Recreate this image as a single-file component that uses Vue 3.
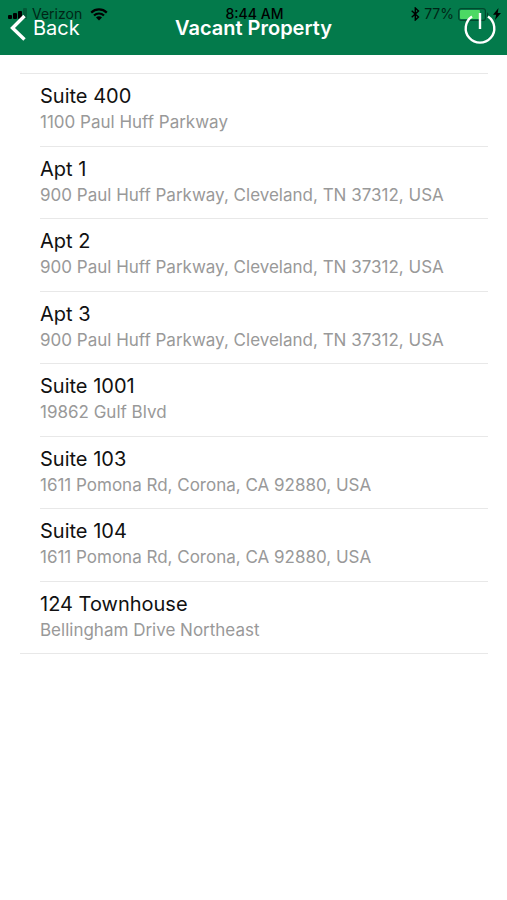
<template>
  <div class="screen">
    <header class="navbar">
      <!-- The system status bar shares the space of the navigation bar -->
      <div class="status">
        <div class="status-side">
          <svg class="signal" width="20" height="12" viewBox="0 0 20 12" aria-hidden="true">
            <rect x="0" y="7" width="4" height="4" rx="1" />
            <rect x="5" y="5" width="4" height="6" rx="1" />
            <rect x="10" y="3" width="4" height="8" rx="1" />
            <rect x="15" y="0" width="4" height="11" rx="1" opacity="0.25" />
          </svg>
          <span class="carrier">Verizon</span>
          <svg width="18" height="13" viewBox="0 0 18 13" aria-hidden="true">
            <path d="M1.200 4.600a11.200 11.200 0 0 1 15.600 0M4 7.500a7.200 7.200 0 0 1 10 0" fill="none" stroke="#000" stroke-width="2.200" />
            <path d="M9 12.500 6 9.500a4.200 4.200 0 0 1 6 0z" />
          </svg>
        </div>
        <span class="clock">8:44 AM</span>
        <div class="status-side right">
          <svg width="9" height="14" viewBox="0 0 9 14" aria-hidden="true">
            <path d="M.7 3.700 7.500 10 4.300 13V1l3.200 3L.7 10.300" fill="none" stroke="#000" stroke-width="1.400" />
          </svg>
          <span class="percent">77%</span>
          <svg width="31" height="13" viewBox="0 0 31 13" aria-hidden="true">
            <rect x=".6" y=".6" width="26.800" height="11.800" rx="2.500" fill="none" stroke="#000" stroke-opacity=".4" stroke-width="1.200" />
            <rect x="2" y="2" width="20" height="9" rx="1" fill="#4cd964" />
            <path d="M29 4.200a2.500 2.500 0 0 1 0 4.600z" opacity=".4" />
          </svg>
          <svg width="8" height="12" viewBox="0 0 8 12" aria-hidden="true">
            <path d="M5.500 0 0 6.800h3.200L2 12l6-7H4.700z" />
          </svg>
        </div>
      </div>

      <button type="button" class="nav-button back">
        <svg class="chevron" width="17" height="28" viewBox="0 0 17 28" aria-hidden="true">
          <path d="M14.500 2 2.500 14l12 11.500" fill="none" stroke="#fff" stroke-width="3.400" />
        </svg>
        <span>Back</span>
      </button>
      <h1 class="title">Vacant Property</h1>
      <button type="button" class="nav-button power" aria-label="Log out">
        <svg width="34" height="34" viewBox="0 0 34 34" aria-hidden="true">
          <path d="M9 5.500a14.300 14.300 0 1 0 16 0M17 2v16" fill="none" stroke="#fff" stroke-width="2.400" />
        </svg>
      </button>
    </header>

    <main>
      <ul class="property-list">
        <li v-for="property in properties" :key="property.id" class="property">
          <a href="#" class="property-link" @click.prevent>
            <span class="name">{{ property.name }}</span>
            <span class="address">{{ property.address }}</span>
          </a>
        </li>
      </ul>
    </main>
  </div>
</template>

<script setup>
import { ref } from 'vue'

const properties = ref([
  { id: 0, name: 'Suite 400', address: '1100 Paul Huff Parkway' },
  { id: 1, name: 'Apt 1', address: '900 Paul Huff Parkway, Cleveland, TN 37312, USA' },
  { id: 2, name: 'Apt 2', address: '900 Paul Huff Parkway, Cleveland, TN 37312, USA' },
  { id: 3, name: 'Apt 3', address: '900 Paul Huff Parkway, Cleveland, TN 37312, USA' },
  { id: 4, name: 'Suite 1001', address: '19862 Gulf Blvd' },
  { id: 5, name: 'Suite 103', address: '1611 Pomona Rd, Corona, CA 92880, USA' },
  { id: 6, name: 'Suite 104', address: '1611 Pomona Rd, Corona, CA 92880, USA' },
  { id: 7, name: '124 Townhouse', address: 'Bellingham Drive Northeast' },
])
</script>

<style>
body {
  background-color: #fff;
}
</style>

<style scoped>
.screen {
  font-family: Inter, 'Liberation Sans', sans-serif;
  color: #111;
}

.navbar {
  position: relative;
  display: grid;
  grid-template-columns: 1fr auto 1fr;
  align-items: center;
  box-sizing: border-box;
  min-height: 55px;
  padding: 1px 10px 0;
  background-color: #037a4b;
  color: #fff;
}

/* Buttons and title stay above the status bar */
.nav-button,
.title {
  z-index: 1;
}

.nav-button {
  display: flex;
  align-items: center;
  padding: 0;
  border: 0;
  background: none;
  color: inherit;
  font: inherit;
  font-size: 20px;
  line-height: 28px;
  cursor: pointer;
}

.back {
  justify-self: start;
  gap: 6px;
}

.power {
  justify-self: end;
}

.title {
  margin: 0;
  font-size: 20px;
  font-weight: 600;
  line-height: 28px;
}

.status {
  position: absolute;
  top: 5px;
  left: 0;
  right: 0;
  display: grid;
  grid-template-columns: 1fr auto 1fr;
  align-items: center;
  padding: 0 6px 0 8px;
  color: #000;
  font-size: 14px;
  line-height: 18px;
  pointer-events: none;
}

.status-side {
  display: flex;
  align-items: center;
  gap: 4px;
}

.carrier {
  margin-right: 4px;
  opacity: 0.7;
}

.percent {
  opacity: 0.7;
}

.clock {
  font-weight: 500;
}

.right {
  justify-content: flex-end;
}

.property-list {
  margin: 18px 19px 0 20px;
  padding: 0;
  border-top: 1px solid #e8e8e8;
  border-bottom: 1px solid #e8e8e8;
  list-style: none;
}

.property {
  margin-left: 20px;
}

.property + .property {
  border-top: 1px solid #e8e8e8;
}

.property-link {
  display: block;
  padding: 8px 0 12px;
  color: inherit;
  text-decoration: none;
}

.property:nth-child(even) .property-link {
  padding-bottom: 11px;
}

.name,
.address {
  display: block;
}

.name {
  font-size: 20px;
  line-height: 28px;
}

.address {
  color: #999;
  font-size: 17px;
  line-height: 24px;
}
</style>
